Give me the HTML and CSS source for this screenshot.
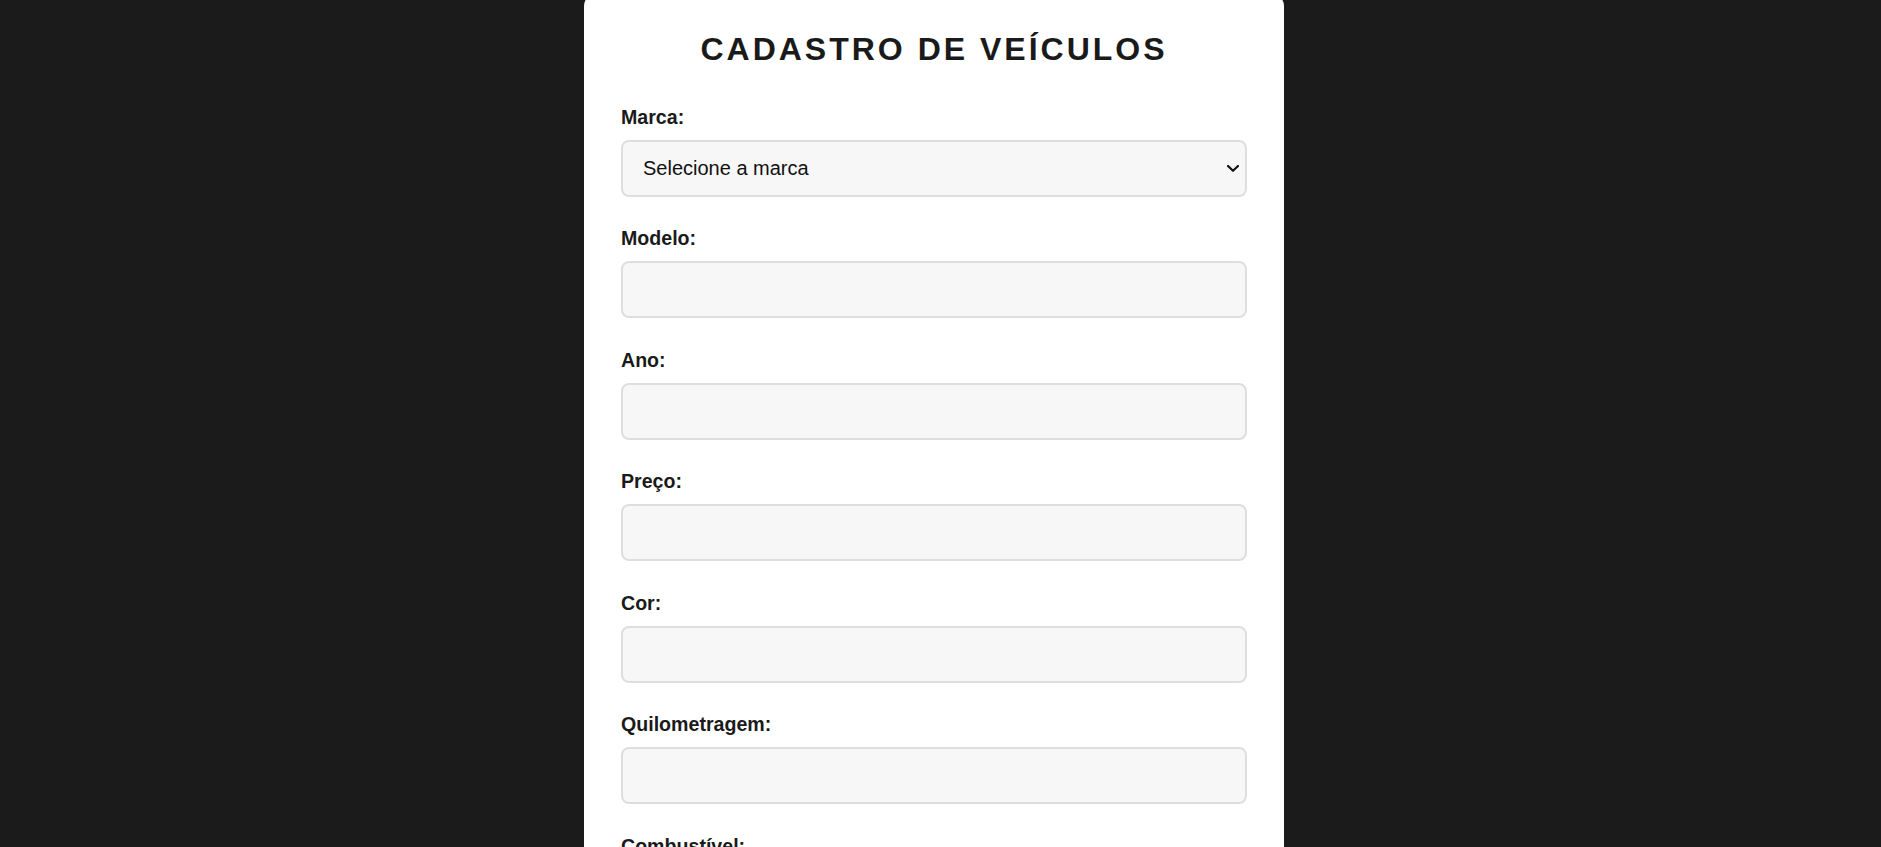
FILE: index.html
```html
<!DOCTYPE html>
<html lang="pt-BR">
<head>
<meta charset="utf-8">
<title>Cadastro de Veículos</title>
<link rel="stylesheet" href="styles.css">
</head>
<body>
<main class="page">
  <form class="card">
    <h1 class="title">CADASTRO DE VEÍCULOS</h1>

    <div class="field">
      <label class="label" for="marca">Marca:</label>
      <div class="select-wrap">
        <select id="marca" class="control select">
          <option>Selecione a marca</option>
          <option>Chevrolet</option>
          <option>Fiat</option>
          <option>Ford</option>
          <option>Volkswagen</option>
        </select>
        <svg class="chevron" width="12" height="7" viewBox="0 0 12 7" aria-hidden="true">
          <polyline points="1,1 6,5.8 11,1" fill="none" stroke="#111" stroke-width="2.2" stroke-linecap="round" stroke-linejoin="round"/>
        </svg>
      </div>
    </div>

    <div class="field">
      <label class="label" for="modelo">Modelo:</label>
      <input id="modelo" class="control" type="text">
    </div>

    <div class="field">
      <label class="label" for="ano">Ano:</label>
      <input id="ano" class="control" type="text">
    </div>

    <div class="field">
      <label class="label" for="preco">Preço:</label>
      <input id="preco" class="control" type="text">
    </div>

    <div class="field">
      <label class="label" for="cor">Cor:</label>
      <input id="cor" class="control" type="text">
    </div>

    <div class="field">
      <label class="label" for="km">Quilometragem:</label>
      <input id="km" class="control" type="text">
    </div>

    <div class="field">
      <label class="label" for="comb">Combustível:</label>
      <div class="select-wrap">
        <select id="comb" class="control select">
          <option>Selecione o combustível</option>
          <option>Gasolina</option>
          <option>Etanol</option>
          <option>Flex</option>
          <option>Diesel</option>
        </select>
        <svg class="chevron" width="12" height="7" viewBox="0 0 12 7" aria-hidden="true">
          <polyline points="1,1 6,5.8 11,1" fill="none" stroke="#111" stroke-width="2.2" stroke-linecap="round" stroke-linejoin="round"/>
        </svg>
      </div>
    </div>
  </form>
</main>
</body>
</html>
```

FILE: styles.css
```css
html, body {
  margin: 0;
  padding: 0;
}

body {
  background: #1b1b1b;
  font-family: "Liberation Sans", Arial, sans-serif;
  color: #1a1a1a;
}

.page {
  display: flex;
  justify-content: center;
  padding-right: 13px;
}

.card {
  width: 700px;
  box-sizing: border-box;
  margin-top: -6px;
  padding: 37px 37px 40px;
  background: #ffffff;
  border-radius: 12px;
}

.title {
  margin: 0 0 37.5px;
  font-size: 32px;
  font-weight: bold;
  letter-spacing: 3px;
  text-align: center;
  color: #1a1a1a;
}

.field {
  margin-bottom: 30.5px;
}

.label {
  display: block;
  margin-bottom: 11px;
  font-size: 19.6px;
  font-weight: bold;
  color: #1a1a1a;
}

.control {
  display: block;
  width: 100%;
  box-sizing: border-box;
  margin: 0;
  padding: 15px 20px;
  font-family: "Liberation Sans", Arial, sans-serif;
  font-size: 20px;
  line-height: 23px;
  height: 57px;
  color: #111;
  background: #f7f7f7;
  border: 2px solid #dedede;
  border-radius: 8px;
  outline: none;
}

.select-wrap {
  position: relative;
}

.select {
  appearance: none;
  -webkit-appearance: none;
  padding-right: 40px;
}

.chevron {
  position: absolute;
  right: 8px;
  top: 50%;
  margin-top: -3px;
  pointer-events: none;
}
```
